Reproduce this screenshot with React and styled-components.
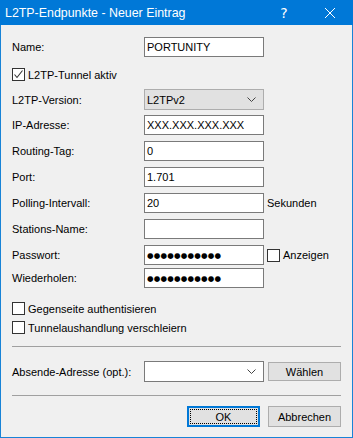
import React from 'react';
import styled, { createGlobalStyle } from 'styled-components';

// Global reset: _______________________________________
const GlobalStyle = createGlobalStyle`
   * { box-sizing: border-box; }
   body {
      margin: 0;
      background: #f0f0f0;
      font-family: "Liberation Sans", Arial, sans-serif;
      font-size: 11px;
      color: #000;
   }
`;

// Window frame: _______________________________________
const Window = styled.div`
   width: 353px;
   height: 438px;
   background: #f0f0f0;
   border: 1px solid #1883d7;
   border-top: none;
   display: flex;
   flex-direction: column;
`;

const TitleBar = styled.div`
   height: 25px;
   margin: 0 -1px;
   background: #0078d7;
   color: #fff;
   display: flex;
   align-items: center;
   padding-left: 5px;
   font-size: 12.4px;
`;

const Title = styled.span`
   flex: 1;
`;

const TitleButton = styled.span`
   width: 46px;
   height: 25px;
   display: flex;
   align-items: center;
   justify-content: center;
   font-size: 14px;
   font-family: "DejaVu Sans", sans-serif;
`;

const Body = styled.div`
   padding: 0 11px;
   display: flex;
   flex-direction: column;
`;

// Rows: _______________________________________________
const Row = styled.div`
   display: flex;
   align-items: center;
   height: ${(p) => p.$h || 20}px;
   margin-top: ${(p) => p.$mt || 0}px;
   justify-content: ${(p) => (p.$end ? 'flex-end' : 'flex-start')};
   gap: ${(p) => p.$gap || 0}px;
`;

const Label = styled.span`
   width: 132px;
   flex: none;
`;

const Input = styled.input`
   width: 120px;
   height: 20px;
   border: 1px solid #7a7a7a;
   background: #fff;
   padding: 0 2px;
   margin: 0;
   font-family: ${(p) => (p.$secret ? '"DejaVu Sans", sans-serif' : '"Liberation Sans", Arial, sans-serif')};
   font-size: ${(p) => (p.$secret ? '7.5px' : '11px')};
   letter-spacing: ${(p) => (p.$secret ? '0.2px' : '0')};
   color: #000;
   outline: none;
`;

const Select = styled.div`
   width: 120px;
   height: 21px;
   border: 1px solid ${(p) => (p.$editable ? '#7a7a7a' : '#adadad')};
   background: ${(p) => (p.$editable ? '#fff' : '#e1e1e1')};
   display: flex;
   align-items: center;
   padding: 0 7px 0 2px;
   justify-content: space-between;
`;

const After = styled.span`
   margin-left: 3px;
`;

const Check = styled.label`
   display: flex;
   align-items: center;
   gap: 3px;
   margin-left: ${(p) => p.$ml || 0}px;
`;

const Box = styled.span`
   width: 13px;
   height: 13px;
   border: 1px solid #333;
   background: #fff;
   display: flex;
   align-items: center;
   justify-content: center;
`;

const Separator = styled.div`
   height: 1px;
   background: #a0a0a0;
   margin-top: ${(p) => p.$mt}px;
`;

const Button = styled.button`
   width: 73px;
   height: ${(p) => p.$h || 21}px;
   margin: 0;
   padding: 0;
   background: #e1e1e1;
   border: 1px solid ${(p) => (p.$default ? '#0078d7' : '#adadad')};
   font-family: "Liberation Sans", Arial, sans-serif;
   font-size: 11px;
   color: #000;
   position: relative;
   margin-left: ${(p) => p.$ml || 0}px;
   ${(p) =>
      p.$default &&
      `
      box-shadow: inset 0 0 0 1px #0078d7;
      &::after {
         content: '';
         position: absolute;
         inset: 2px;
         border: 1px dotted #000;
      }
   `}
`;

// Icons: ______________________________________________
const Chevron = () => (
   <svg width="9" height="5" viewBox="0 0 9 5">
      <polyline points="0.5,0.5 4.5,4.5 8.5,0.5" fill="none" stroke="#444" strokeWidth="1" />
   </svg>
);

const Tick = () => (
   <svg width="11" height="11" viewBox="0 0 11 11">
      <polyline points="1.5,5.5 4,8.5 9.5,1.5" fill="none" stroke="#333" strokeWidth="1.1" />
   </svg>
);

const Close = () => (
   <svg width="10" height="10" viewBox="0 0 10 10">
      <line x1="0" y1="0" x2="10" y2="10" stroke="#fff" strokeWidth="1" />
      <line x1="10" y1="0" x2="0" y2="10" stroke="#fff" strokeWidth="1" />
   </svg>
);

const dots = '●●●●●●●●●●●';

const Field = ({ label, value, mt, after, secret }) => (
   <Row $mt={mt}>
      <Label>{label}</Label>
      <Input readOnly value={value} $secret={secret} />
      {after}
   </Row>
);

const App = () => {
   return (
      <>
         <GlobalStyle />
         <Window>
            <TitleBar>
               <Title>L2TP-Endpunkte - Neuer Eintrag</Title>
               <TitleButton>?</TitleButton>
               <TitleButton>
                  <Close />
               </TitleButton>
            </TitleBar>
            <Body>
               <Field label="Name:" value="PORTUNITY" mt={12} />
               <Row $h={13} $mt={11}>
                  <Check>
                     <Box>
                        <Tick />
                     </Box>
                     L2TP-Tunnel aktiv
                  </Check>
               </Row>
               <Row $h={21} $mt={8}>
                  <Label>L2TP-Version:</Label>
                  <Select>
                     L2TPv2
                     <Chevron />
                  </Select>
               </Row>
               <Field label="IP-Adresse:" value="XXX.XXX.XXX.XXX" mt={5} />
               <Field label="Routing-Tag:" value="0" mt={6} />
               <Field label="Port:" value="1.701" mt={6} />
               <Field label="Polling-Intervall:" value="20" mt={6} after={<After>Sekunden</After>} />
               <Field label="Stations-Name:" value="" mt={6} />
               <Field
                  label="Passwort:"
                  value={dots}
                  secret
                  mt={6}
                  after={
                     <Check $ml={3}>
                        <Box />
                        Anzeigen
                     </Check>
                  }
               />
               <Field label="Wiederholen:" value={dots} secret mt={3} />
               <Row $h={13} $mt={14}>
                  <Check>
                     <Box />
                     Gegenseite authentisieren
                  </Check>
               </Row>
               <Row $h={13} $mt={6}>
                  <Check>
                     <Box />
                     Tunnelaushandlung verschleiern
                  </Check>
               </Row>
               <Separator $mt={12} />
               <Row $h={21} $mt={14}>
                  <Label>Absende-Adresse (opt.):</Label>
                  <Select $editable>
                     <span />
                     <Chevron />
                  </Select>
                  <Button $h={19} $ml={4}>
                     Wählen
                  </Button>
               </Row>
               <Separator $mt={13} />
               <Row $h={21} $mt={10} $end $gap={8}>
                  <Button $default>OK</Button>
                  <Button>Abbrechen</Button>
               </Row>
            </Body>
         </Window>
      </>
   );
};

export default App;
